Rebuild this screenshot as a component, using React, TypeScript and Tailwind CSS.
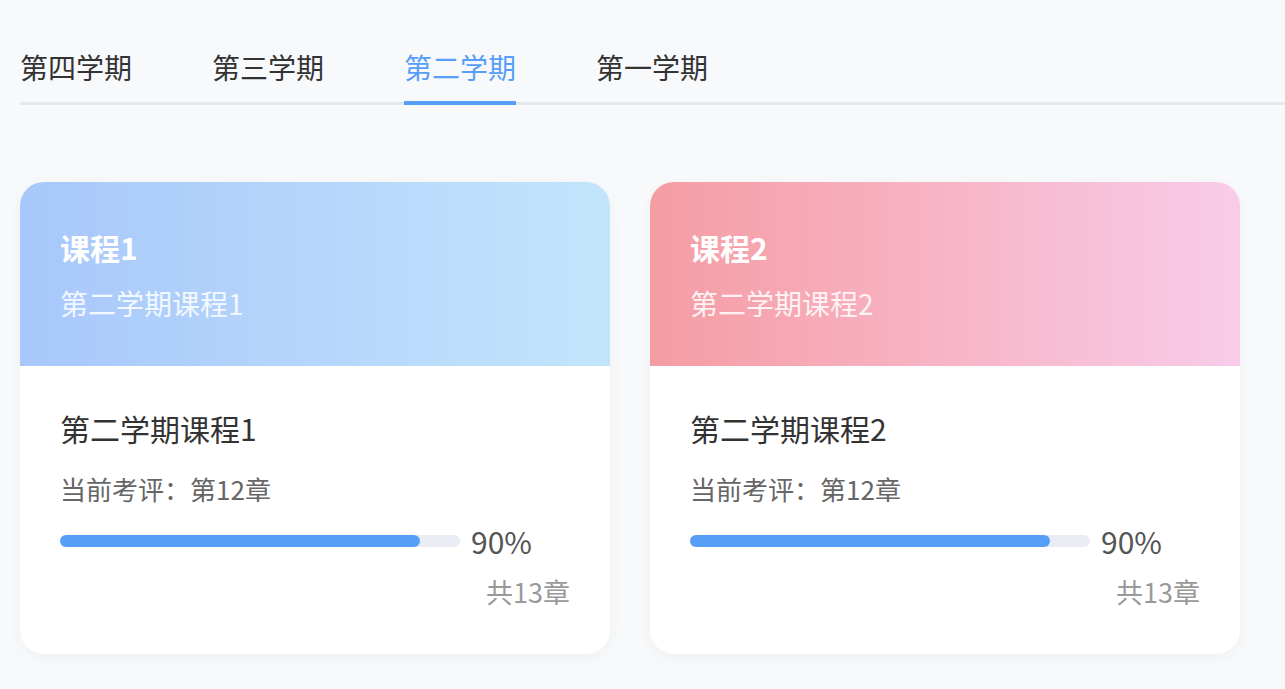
import React from 'react';

const terms = ['第四学期', '第三学期', '第二学期', '第一学期'];

const courses = [
  { name: '课程1', desc: '第二学期课程1', header: 'bg-gradient-to-r from-[#a8c7fb] to-[#c3e5fb]', current: 12, total: 13, percent: 90 },
  { name: '课程2', desc: '第二学期课程2', header: 'bg-gradient-to-r from-[#f59ca3] to-[#f8cce9]', current: 12, total: 13, percent: 90 },
];

const App: React.FC = () => {
  const active = 2;
  return (
    <div className="min-h-screen bg-[#f8f9fb] pt-[47px] pl-5 font-['Noto_Sans_CJK_SC',sans-serif]">
      {/* Tabs */}
      <div className="flex gap-20 border-b-[3px] border-[#e6e8f0]">
        {terms.map((t, i) => (
          <div
            key={t}
            className={`-mb-[3px] border-b-4 pb-[14px] text-[28px] leading-[40px] ${
              i === active ? 'border-[#579ef8] text-[#579ef8]' : 'border-transparent text-[#333]'
            }`}
          >
            {t}
          </div>
        ))}
      </div>

      {/* Course cards */}
      <div className="mt-[77px] flex gap-10">
        {courses.map((c) => (
          <div key={c.name} className="w-[590px] overflow-hidden rounded-3xl bg-white shadow-[0_4px_16px_rgba(0,0,0,0.04)]">
            <div className={`h-[184px] px-10 pt-[45px] ${c.header}`}>
              <div className="text-[30px] font-bold leading-[40px] text-white">{c.name}</div>
              <div className="mt-4 text-[28px] leading-[40px] text-white/85">{c.desc}</div>
            </div>
            <div className="px-10 pt-[42px] pb-[44px]">
              <div className="text-[30px] leading-[40px] text-[#333]">{c.desc}</div>
              <div className="mt-[23px] text-[26px] leading-[36px] text-[#666]">当前考评：第{c.current}章</div>
              <div className="mt-[14px] flex h-10 items-center">
                <div className="h-3 w-[400px] rounded-full bg-[#e9ecf3]">
                  <div className="h-3 rounded-full bg-[#579ef8]" style={{ width: `${c.percent}%` }} />
                </div>
                <span className="ml-[11px] text-[30px] leading-[40px] text-[#555]">{c.percent}%</span>
              </div>
              <div className="mt-[13px] text-right text-[27px] leading-[36px] text-[#999]">共{c.total}章</div>
            </div>
          </div>
        ))}
      </div>
    </div>
  );
};

export default App;
